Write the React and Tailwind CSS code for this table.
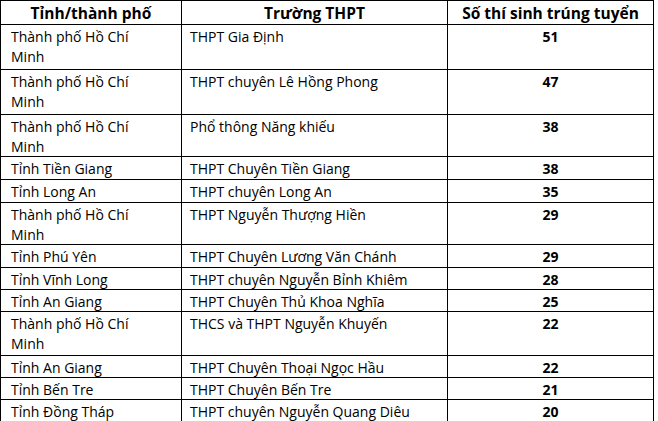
const rows = [
  { h: 45, tinh: ['Thành phố Hồ Chí', 'Minh'], truong: 'THPT Gia Định', so: 51 },
  { h: 45, tinh: ['Thành phố Hồ Chí', 'Minh'], truong: 'THPT chuyên Lê Hồng Phong', so: 47 },
  { h: 42, tinh: ['Thành phố Hồ Chí', 'Minh'], truong: 'Phổ thông Năng khiếu', so: 38 },
  { h: 23, tinh: ['Tỉnh Tiền Giang'], truong: 'THPT Chuyên Tiền Giang', so: 38 },
  { h: 23, tinh: ['Tỉnh Long An'], truong: 'THPT chuyên Long An', so: 35 },
  { h: 42, tinh: ['Thành phố Hồ Chí', 'Minh'], truong: 'THPT Nguyễn Thượng Hiền', so: 29 },
  { h: 23, tinh: ['Tỉnh Phú Yên'], truong: 'THPT Chuyên Lương Văn Chánh', so: 29 },
  { h: 22, tinh: ['Tỉnh Vĩnh Long'], truong: 'THPT chuyên Nguyễn Bỉnh Khiêm', so: 28 },
  { h: 22, tinh: ['Tỉnh An Giang'], truong: 'THPT Chuyên Thủ Khoa Nghĩa', so: 25 },
  { h: 44, tinh: ['Thành phố Hồ Chí', 'Minh'], truong: 'THCS và THPT Nguyễn Khuyến', so: 22 },
  { h: 22, tinh: ['Tỉnh An Giang'], truong: 'THPT Chuyên Thoại Ngọc Hầu', so: 22 },
  { h: 22, tinh: ['Tỉnh Bến Tre'], truong: 'THPT Chuyên Bến Tre', so: 21 },
  { h: 22, tinh: ['Tỉnh Đồng Tháp'], truong: 'THPT chuyên Nguyễn Quang Diêu', so: 20 },
];

const cols = 'grid grid-cols-[181px_266px_206px]';

export default function App() {
  return (
    <div className="w-[658px] h-[421px] bg-white overflow-hidden text-black" style={{ fontFamily: '"Open Sans", "Noto Sans", sans-serif' }}>
      <div className="w-[654px] border-l border-t border-black">
        {/* header */}
        <div className={`${cols} h-[24px] border-b border-black text-[15.5px] leading-[20px] font-bold`}>
          <div className="border-r border-black text-center pt-[2px] overflow-hidden">Tỉnh/thành phố</div>
          <div className="border-r border-black text-center pt-[2px] overflow-hidden">Trường THPT</div>
          <div className="border-r border-black text-center pt-[2px] overflow-hidden whitespace-nowrap">Số thí sinh trúng tuyển</div>
        </div>

        {rows.map((r, i) => (
          <div key={i} className={`${cols} border-b border-black text-[14px] leading-[20px]`} style={{ height: r.h }}>
            <div className="border-r border-black pl-[10px] pt-[2px] overflow-hidden">
              {r.tinh.map((t, j) => <div key={j}>{t}</div>)}
            </div>
            <div className="border-r border-black pl-[8px] pt-[2px] overflow-hidden whitespace-nowrap">{r.truong}</div>
            <div className="border-r border-black text-center font-bold pt-[2px] overflow-hidden">{r.so}</div>
          </div>
        ))}
      </div>
    </div>
  );
}
